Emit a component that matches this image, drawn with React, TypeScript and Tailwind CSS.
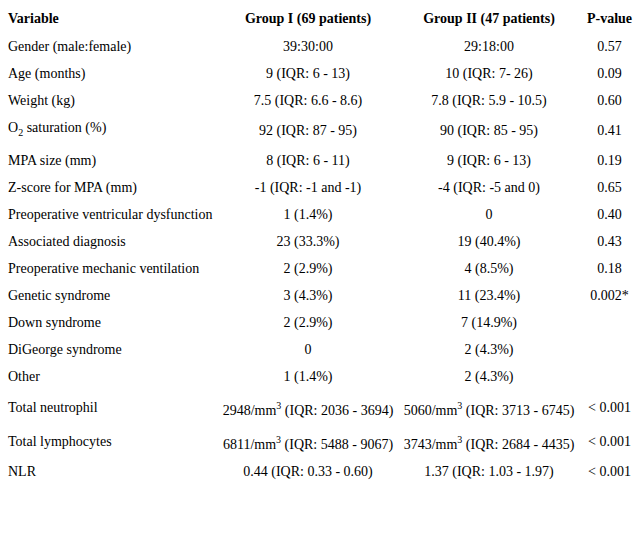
import { FC, ReactNode } from "react";

type Row = {
  label: ReactNode;
  g1: ReactNode;
  g2: ReactNode;
  p: ReactNode;
};

// superscript / subscript that push the line box open, like the old table did
const Sup: FC<{ children: ReactNode }> = ({ children }) => (
  <span className="align-[6px] text-[10px] leading-[19px]">{children}</span>
);

const Sub: FC<{ children: ReactNode }> = ({ children }) => (
  <span className="align-[-4px] text-[10px] leading-[19px]">{children}</span>
);

const rows: Row[] = [
  { label: "Gender (male:female)", g1: "39:30:00", g2: "29:18:00", p: "0.57" },
  { label: "Age (months)", g1: "9 (IQR: 6 - 13)", g2: "10 (IQR: 7- 26)", p: "0.09" },
  { label: "Weight (kg)", g1: "7.5 (IQR: 6.6 - 8.6)", g2: "7.8 (IQR: 5.9 - 10.5)", p: "0.60" },
  {
    label: (
      <>
        O<Sub>2</Sub> saturation (%)
      </>
    ),
    g1: "92 (IQR: 87 - 95)",
    g2: "90 (IQR: 85 - 95)",
    p: "0.41",
  },
  { label: "MPA size (mm)", g1: "8 (IQR: 6 - 11)", g2: "9 (IQR: 6 - 13)", p: "0.19" },
  { label: "Z-score for MPA (mm)", g1: "-1 (IQR: -1 and -1)", g2: "-4 (IQR: -5 and 0)", p: "0.65" },
  { label: "Preoperative ventricular dysfunction", g1: "1 (1.4%)", g2: "0", p: "0.40" },
  { label: "Associated diagnosis", g1: "23 (33.3%)", g2: "19 (40.4%)", p: "0.43" },
  { label: "Preoperative mechanic ventilation", g1: "2 (2.9%)", g2: "4 (8.5%)", p: "0.18" },
  { label: "Genetic syndrome", g1: "3 (4.3%)", g2: "11 (23.4%)", p: "0.002*" },
  { label: "Down syndrome", g1: "2 (2.9%)", g2: "7 (14.9%)", p: "" },
  { label: "DiGeorge syndrome", g1: "0", g2: "2 (4.3%)", p: "" },
  { label: "Other", g1: "1 (1.4%)", g2: "2 (4.3%)", p: "" },
  {
    label: "Total neutrophil",
    g1: (
      <>
        2948/mm<Sup>3</Sup> (IQR: 2036 - 3694)
      </>
    ),
    g2: (
      <>
        5060/mm<Sup>3</Sup> (IQR: 3713 - 6745)
      </>
    ),
    p: "< 0.001",
  },
  {
    label: "Total lymphocytes",
    g1: (
      <>
        6811/mm<Sup>3</Sup> (IQR: 5488 - 9067)
      </>
    ),
    g2: (
      <>
        3743/mm<Sup>3</Sup> (IQR: 2684 - 4435)
      </>
    ),
    p: "< 0.001",
  },
  { label: "NLR", g1: "0.44 (IQR: 0.33 - 0.60)", g2: "1.37 (IQR: 1.03 - 1.97)", p: "< 0.001" },
];

const App: FC = () => {
  return (
    <div className="min-h-screen w-[639px] bg-white text-black font-['Liberation_Serif','Times_New_Roman',serif] text-[14px] leading-4 pt-[5px]">
      <table className="table-fixed w-[639px]">
        <colgroup>
          <col className="w-[218px]" />
          <col className="w-[180px]" />
          <col className="w-[182px]" />
          <col className="w-[59px]" />
        </colgroup>
        <thead>
          <tr className="font-bold">
            <th className="text-left align-middle pl-2 pt-[6px] pb-[7px]">Variable</th>
            <th className="text-center align-middle pt-[6px] pb-[7px] whitespace-nowrap">Group I (69 patients)</th>
            <th className="text-center align-middle pt-[6px] pb-[7px] whitespace-nowrap">Group II (47 patients)</th>
            <th className="text-center align-middle pt-[6px] pb-[7px]">P-value</th>
          </tr>
        </thead>
        <tbody>
          {rows.map((row, i) => (
            <tr key={i}>
              <td className="text-left align-middle pl-2 pt-[5px] pb-[6px] whitespace-nowrap">{row.label}</td>
              <td className="text-center align-middle pt-[5px] pb-[6px] whitespace-nowrap">{row.g1}</td>
              <td className="text-center align-middle pt-[5px] pb-[6px] whitespace-nowrap">{row.g2}</td>
              <td className="text-center align-middle pt-[5px] pb-[6px] whitespace-nowrap">{row.p}</td>
            </tr>
          ))}
        </tbody>
      </table>
    </div>
  );
};

export default App;
